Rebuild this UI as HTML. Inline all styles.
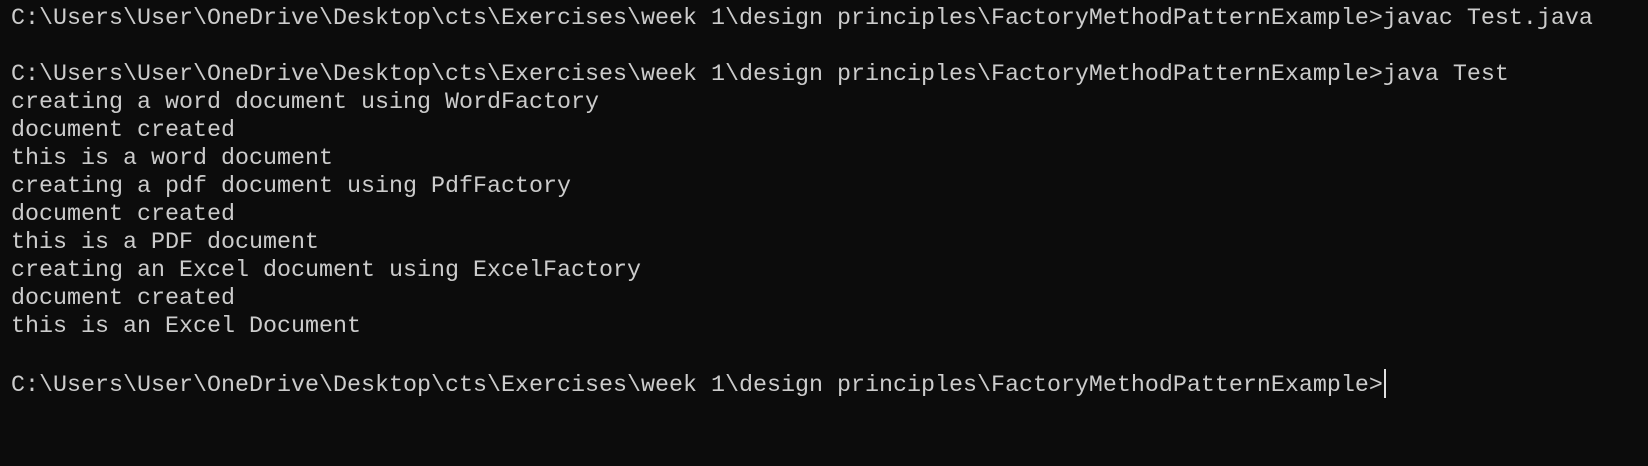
<!DOCTYPE html>
<html><head><meta charset="utf-8"><style>
html,body{margin:0;padding:0;background:#0c0c0c;width:1648px;height:466px;overflow:hidden}
pre{margin:0;padding:5px 0 0 11px;font-family:"Liberation Mono",monospace;font-size:23.33px;line-height:28px;color:#cccccc;white-space:pre}
.c{display:inline-block;width:2px;height:29px;background:#e0e0e0;vertical-align:-7px;margin-left:1px}
</style></head><body><pre>C:\Users\User\OneDrive\Desktop\cts\Exercises\week 1\design principles\FactoryMethodPatternExample&gt;javac Test.java

C:\Users\User\OneDrive\Desktop\cts\Exercises\week 1\design principles\FactoryMethodPatternExample&gt;java Test
creating a word document using WordFactory
document created
this is a word document
creating a pdf document using PdfFactory
document created
this is a PDF document
creating an Excel document using ExcelFactory
document created
this is an Excel Document

C:\Users\User\OneDrive\Desktop\cts\Exercises\week 1\design principles\FactoryMethodPatternExample&gt;<span class="c"></span></pre></body></html>
